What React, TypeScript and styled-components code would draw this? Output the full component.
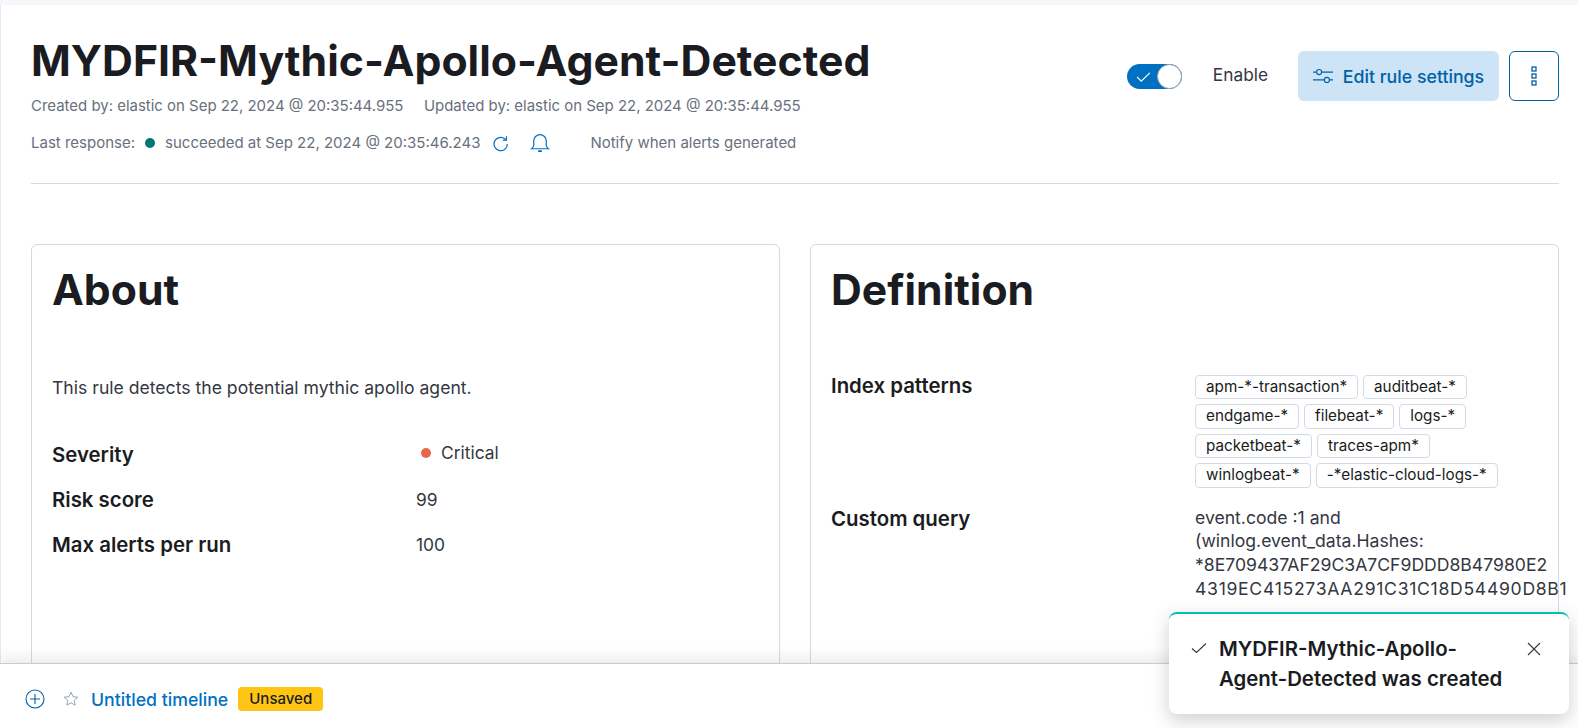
import React from "react";
import styled, { createGlobalStyle } from "styled-components";

const Global = createGlobalStyle`
  html, body { margin: 0; padding: 0; height: 100%; overflow: hidden; background: #fff; }
  body { font-family: Inter, "Liberation Sans", sans-serif; color: #343741; }
  * { box-sizing: border-box; }
`;
const Page = styled.div`
  height: 728px; display: flex; flex-direction: column; overflow: hidden;
  background: #f5f7fb; padding: 5px 0 0 0; position: relative;
`;
const Main = styled.main`
  flex: 1; min-height: 0; overflow: hidden; background: #fff; padding: 0 19px 0 30px; border-left: 1px solid #e3e8f2;
`;
const Header = styled.header`
  display: flex; justify-content: space-between; align-items: flex-start;
  height: 179px; border-bottom: 1px solid #d3dae6;
`;
const HeadLeft = styled.div` padding-top: 31px; `;
const Title = styled.h1`
  margin: 0; font-size: 42.75px; line-height: 50px; font-weight: 700; color: #1a1c21; white-space: nowrap;
`;
const Meta = styled.div`
  display: flex; gap: 20.5px; margin-top: 10px; font-size: 14.96px; line-height: 20px; color: #69707d;
`;
const Status = styled.div`
  display: flex; align-items: center; margin-top: 15px; font-size: 15px; line-height: 20px; color: #69707d; height: 24px;
`;
const Dot = styled.span<{ $c: string; $m: string }>`
  width: 10px; height: 10px; border-radius: 50%; background: ${p => p.$c}; margin: ${p => p.$m}; flex: none;
`;
const Icon = styled.svg<{ $w?: number; $m?: string }>`
  width: ${p => p.$w ?? 16}px; height: ${p => p.$w ?? 16}px; flex: none; margin: ${p => p.$m ?? "0"};
`;
const Actions = styled.div` display: flex; align-items: center; padding-top: 46px; `;
const Toggle = styled.span`
  width: 55px; height: 25px; border-radius: 13px; background: #0071c2; position: relative; display: block; margin-right: 31px; margin-top: 1px;
`;
const Knob = styled.span`
  position: absolute; right: 0; top: 0; width: 25px; height: 25px; border-radius: 50%; background: #fff; border: 1px solid #98a2b3;
`;
const Check = styled.svg`
  position: absolute; left: 9px; top: 8px; width: 15px; height: 10px;
`;
const EnableLabel = styled.span` font-size: 17.3px; color: #343741; margin-right: 30px; margin-top: -3px; `;
const EditBtn = styled.button`
  width: 201px; height: 50px; border: 0; border-radius: 6px; background: #cce4f5; color: #0061a6;
  font: 500 17.75px Inter, sans-serif; display: flex; align-items: center; justify-content: center; gap: 10px; padding: 0;
`;
const MoreBtn = styled.button`
  width: 50px; height: 50px; margin-left: 10px; background: #fff; border: 1px solid #0061a6; border-radius: 6px;
  display: flex; align-items: center; justify-content: center; padding: 0;
`;
const Cards = styled.div`
  display: grid; grid-template-columns: 749px 749px; gap: 30px; margin-top: 60px;
`;
const Card = styled.section`
  border: 1px solid #d3dae6; border-radius: 6px; padding: 20px; height: 600px; background: #fff;
`;
const CardTitle = styled.h2`
  margin: 0; font-size: 42.67px; line-height: 50px; font-weight: 700; color: #1a1c21;
`;
const Desc = styled.p` margin: 61px 0 0; font-size: 17.6px; line-height: 24px; color: #343741; `;
const AboutList = styled.dl`
  margin: 43px 0 0; display: grid; grid-template-columns: 364px 1fr; row-gap: 21px; align-items: center;
`;
const Term = styled.dt` font-size: 20.4px; line-height: 24px; font-weight: 600; color: #1a1c21; `;
const Val = styled.dd<{ $up?: boolean }>`
  margin: ${p => (p.$up ? "-4px 0 0" : "0")}; font-size: 17.4px; line-height: 24px; color: #343741; display: flex; align-items: center;
`;
const DefList = styled.dl`
  margin: 59px 0 0; display: grid; grid-template-columns: 364px 1fr; row-gap: 19px;
`;
const Pills = styled.div` display: flex; flex-wrap: wrap; gap: 5px; width: 345px; padding-top: .5px; `;
const Pill = styled.span`
  font-size: 15.25px; line-height: 22px; height: 24.5px; padding: 0 10px; border: 1px solid #d3dae6; border-radius: 4px;
  color: #1a1c21; background: #fff; white-space: nowrap;
`;
const Query = styled.div`
  font-size: 17.6px; line-height: 23.8px; color: #343741; width: 355px; margin-top: -1px; overflow-wrap: anywhere;
`;
const HashTail = styled.span` display: block; letter-spacing: .7px; white-space: nowrap; `;
const Bar = styled.footer`
  height: 65px; flex: none; background: #fff; border-top: 1px solid #c9ccd4; display: flex; align-items: center;
  padding: 6px 0 0 25px; box-shadow: 0 -6px 12px rgba(60,65,80,.1); position: relative;
`;
const TimelineLink = styled.a` font-size: 17.7px; font-weight: 500; color: #0071c2; margin-right: 10px; `;
const Badge = styled.span`
  height: 24px; padding: 0 11px; border-radius: 4px; background: #fec514; color: #1a1c21; font-size: 15px; font-weight: 500; line-height: 24px;
`;
const Toast = styled.aside`
  position: absolute; left: 1169px; top: 612px; width: 400px; height: 102px; background: #fff; border-radius: 8px;
  border-top: 2px solid #00bfb3; box-shadow: 0 6px 18px rgba(60,65,80,.25); display: flex; padding: 20px 0 0 22px;
`;
const ToastText = styled.div`
  width: 288px; margin-left: 12px; font-size: 20.4px; line-height: 30px; font-weight: 600; color: #1a1c21;
`;
const CloseBtn = styled.button`
  border: 0; background: none; padding: 0; margin: 7px 0 0 19px; height: 16px; width: 16px; display: block;
`;
const NotifyLabel = styled.span` margin-left: 40px; `;

const Refresh = () => (
  <Icon viewBox="0 0 16 16" $w={17} $m="0 0 0 12px" fill="none" stroke="#0071c2" strokeWidth="1.15">
    <path d="M13.2 4.6A6.3 6.3 0 1 0 14.5 8.5" /><path d="M13.6 1.2v3.6h-3.4" />
  </Icon>
);
const Bell = () => (
  <Icon viewBox="0 0 16 16" $w={20} $m="0 0 0 21px" fill="none" stroke="#0071c2" strokeWidth=".95">
    <path d="M1.3 12.6c1.1-.7 1.7-1.6 1.7-3V6.3a5 5 0 0 1 10 0v3.3c0 1.4.6 2.3 1.7 3z" /><path d="M6.5 14.5h3" strokeWidth="1.4" />
  </Icon>
);

export default function App() {
  return (
    <Page>
      <Global />
      <Main>
        <Header>
          <HeadLeft>
            <Title>MYDFIR-Mythic-Apollo-Agent-Detected</Title>
            <Meta>
              <span>Created by: elastic on Sep 22, 2024 @ 20:35:44.955</span>
              <span>Updated by: elastic on Sep 22, 2024 @ 20:35:44.955</span>
            </Meta>
            <Status>
              <span>Last response:</span>
              <Dot $c="#007871" $m="0 10px" />
              <span>succeeded at Sep 22, 2024 @ 20:35:46.243</span>
              <Refresh />
              <Bell />
              <NotifyLabel>Notify when alerts generated</NotifyLabel>
            </Status>
          </HeadLeft>
          <Actions>
            <Toggle>
              <Check viewBox="0 0 16 11" fill="none" stroke="#fff" strokeWidth="1.3"><path d="M1 5.5l4.5 4.5L15 1" /></Check>
              <Knob />
            </Toggle>
            <EnableLabel>Enable</EnableLabel>
            <EditBtn>
              <Icon viewBox="0 0 18 16" $w={20} fill="none" stroke="#0061a6" strokeWidth="1">
                <path d="M0 4.5h3M8 4.5h10M0 11.5h10M15 11.5h3" /><circle cx="5.5" cy="4.5" r="2.3" /><circle cx="12.5" cy="11.5" r="2.3" />
              </Icon>
              Edit rule settings
            </EditBtn>
            <MoreBtn aria-label="More">
              <Icon viewBox="0 0 20 20" $w={20} fill="none" stroke="#0061a6" strokeWidth="1.3">
                <rect x="8" y="1" width="4" height="4" /><rect x="8" y="8" width="4" height="4" /><rect x="8" y="15" width="4" height="4" />
              </Icon>
            </MoreBtn>
          </Actions>
        </Header>
        <Cards>
          <Card>
            <CardTitle>About</CardTitle>
            <Desc>This rule detects the potential mythic apollo agent.</Desc>
            <AboutList>
              <Term>Severity</Term>
              <Val $up><Dot $c="#e7664c" $m="-1px 10px 0 5px" />Critical</Val>
              <Term>Risk score</Term>
              <Val>99</Val>
              <Term>Max alerts per run</Term>
              <Val>100</Val>
            </AboutList>
          </Card>
          <Card>
            <CardTitle>Definition</CardTitle>
            <DefList>
              <Term>Index patterns</Term>
              <Pills>
                {["apm-*-transaction*", "auditbeat-*", "endgame-*", "filebeat-*", "logs-*", "packetbeat-*", "traces-apm*", "winlogbeat-*", "-*elastic-cloud-logs-*"].map(t => <Pill key={t}>{t}</Pill>)}
              </Pills>
              <Term>Custom query</Term>
              <Query>
                event.code :1 and (winlog.event_data.Hashes: *8E709437AF29C3A7CF9DDD8B47980E2
                <HashTail>4319EC415273AA291C31C18D54490D8B1</HashTail>
              </Query>
            </DefList>
          </Card>
        </Cards>
      </Main>
      <Bar>
        <Icon viewBox="0 0 20 20" $w={20} $m="0 18px 0 0" fill="none" stroke="#0061a6" strokeWidth="1.1">
          <circle cx="10" cy="10" r="9" /><path d="M10 5v10M5 10h10" />
        </Icon>
        <Icon viewBox="0 0 16 16" $w={16} $m="0 12px 0 0" fill="none" stroke="#98a2b3" strokeWidth="1">
          <path d="M8 1.2l2 4.5 4.8.5-3.6 3.2 1 4.8L8 11.8l-4.2 2.4 1-4.8L1.2 6.2 6 5.7z" />
        </Icon>
        <TimelineLink>Untitled timeline</TimelineLink>
        <Badge>Unsaved</Badge>
      </Bar>
      <Toast>
        <Icon viewBox="0 0 16 16" $m="6px 0 0 0" fill="none" stroke="#343741" strokeWidth="1.1"><path d="M1 8.5l4.5 4L15 3.5" /></Icon>
        <ToastText>MYDFIR-Mythic-Apollo-Agent-Detected was created</ToastText>
        <CloseBtn aria-label="Close">
          <Icon viewBox="0 0 16 16" fill="none" stroke="#343741" strokeWidth="1.1"><path d="M2 2l12 12M14 2L2 14" /></Icon>
        </CloseBtn>
      </Toast>
    </Page>
  );
}
